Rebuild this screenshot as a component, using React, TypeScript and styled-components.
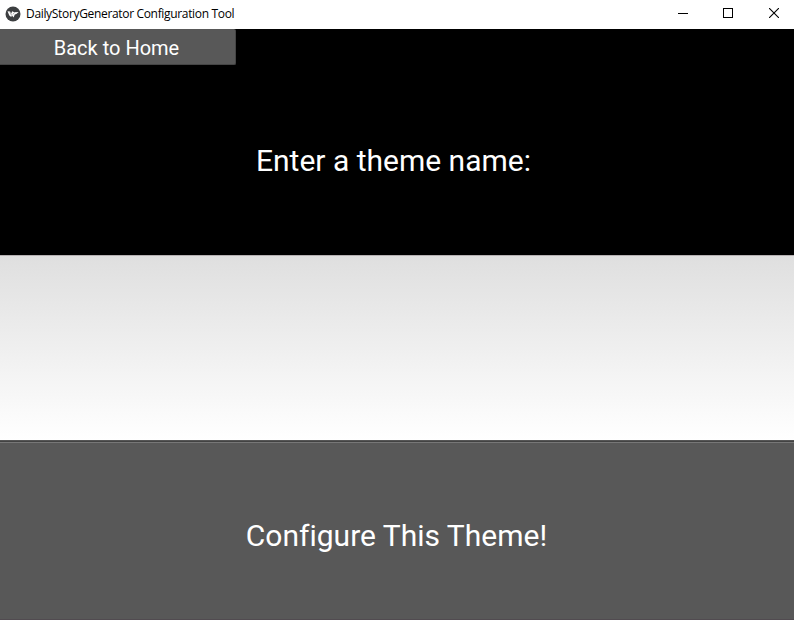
import React from "react";
import styled, { createGlobalStyle } from "styled-components";

const GlobalStyle = createGlobalStyle`
  * { box-sizing: border-box; }
  body { margin: 0; overflow: hidden; background: #000; }
`;

const Window = styled.div`
  display: flex;
  flex-direction: column;
  width: 794px;
  height: 620px;
  background: #000;
  font-family: Roboto, sans-serif;
  color: #fff;
`;

const TitleBar = styled.header`
  display: flex;
  align-items: center;
  flex: 0 0 29px;
  padding-left: 5px;
  background: #fff;
  color: #000;
`;

const AppIcon = styled.svg`
  width: 16px;
  height: 16px;
  margin: 0 5px 2px 0;
`;

const Title = styled.span`
  flex: 1;
  padding-bottom: 1px;
  font: 12px/16px "Open Sans", sans-serif;
  letter-spacing: -0.33px;
  white-space: nowrap;
`;

const WindowControl = styled.button`
  display: flex;
  align-items: center;
  justify-content: center;
  width: 45px;
  height: 29px;
  padding: 0 0 3px;
  border: 0;
  background: none;

  &:last-child { width: 44px; padding-left: 3px; }
`;

const ThemePanel = styled.section`
  display: flex;
  flex-direction: column;
  flex: 0 0 226px;
`;

const BackButton = styled.button`
  width: 236px;
  height: 36px;
  padding: 2px 2px 0 0;
  border: 0;
  border-right: 1px solid #454545;
  border-bottom: 1px solid #454545;
  border-radius: 0 2px 2px 0;
  background: #585858;
  color: #fff;
  font: 20px/30px Roboto, sans-serif;
`;

const Prompt = styled.label`
  display: flex;
  align-items: center;
  justify-content: center;
  flex: 1;
  padding-right: 7px;
  font-size: 30px;
`;

const ThemeInput = styled.input`
  flex: 0 0 185px;
  width: 100%;
  padding: 0 12px;
  border: 0;
  border-top: 1px solid #b5b0b2;
  border-radius: 0;
  outline: 0;
  background: linear-gradient(#dfdfdf, #fff);
  font: 30px Roboto, sans-serif;
`;

const ConfigureButton = styled.button`
  flex: 1;
  padding: 11px 1px 0 0;
  border: 0;
  border-top: 1px solid #555;
  border-bottom: 1px solid #514b50;
  background: linear-gradient(#434343 0 1px, #777 1px 2px, #585858 2px);
  color: #fff;
  font: 30px/36px Roboto, sans-serif;
  font-variant-ligatures: none;
`;

export default function App() {
  return (
    <>
      <GlobalStyle />
      <Window>
        <TitleBar>
          <AppIcon viewBox="0 0 16 16">
            <circle cx="8" cy="8" r="7.5" fill="#3d3f41" />
            <path d="M2.5 5.2 5.1 5.4l1.2 2.1.8-2.3 2.2 1 4.3-.3-2.2 2.2-1.6.4-1.2 2.9-1.6-1.9-.8 1.4-1.9-1.5Z" fill="#fff" />
            <path d="m5 6 1.6 3.4M9.3 6.5 8 8.4" stroke="#5c5d5f" strokeWidth=".5" />
          </AppIcon>
          <Title>DailyStoryGenerator Configuration Tool</Title>
          <WindowControl aria-label="Minimize">
            <svg width="10" height="10" shapeRendering="crispEdges"><path d="M0 5.5h10" stroke="#000" /></svg>
          </WindowControl>
          <WindowControl aria-label="Maximize">
            <svg width="10" height="10" shapeRendering="crispEdges"><path d="M.5.5h9v9h-9Z" fill="none" stroke="#000" /></svg>
          </WindowControl>
          <WindowControl aria-label="Close">
            <svg width="10" height="10"><path d="m0 0 10 10M10 0 0 10" stroke="#000" strokeWidth="1.1" /></svg>
          </WindowControl>
        </TitleBar>
        <ThemePanel>
          <BackButton>Back to Home</BackButton>
          <Prompt htmlFor="theme-name">Enter a theme name:</Prompt>
        </ThemePanel>
        <ThemeInput id="theme-name" />
        <ConfigureButton>Configure This Theme!</ConfigureButton>
      </Window>
    </>
  );
}
